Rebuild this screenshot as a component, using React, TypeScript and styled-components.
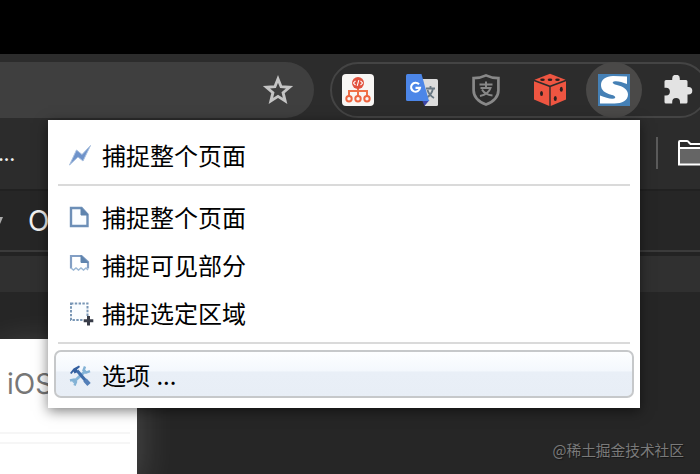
import { memo, ReactNode } from 'react';
import styled, { createGlobalStyle } from 'styled-components';

// SECTION: Styles

const GlobalStyle = createGlobalStyle`
  body {
    margin: 0;
    background: #262626;
    font-family: Inter, 'Liberation Sans', 'Noto Sans CJK SC', sans-serif;
  }
`;

const Screen = styled.div`
  position: relative;
  display: flex;
  flex-direction: column;
  width: 700px;
  height: 474px;
  overflow: hidden;
  background: #262626;
`;

const Desktop = styled.div`
  flex: none;
  height: 54px;
  background: #000;
`;

const Toolbar = styled.div`
  display: flex;
  flex: none;
  gap: 16px;
  box-sizing: border-box;
  height: 66px;
  padding-top: 8px;
  background: #2c2c2c;
`;

const AddressBar = styled.div`
  display: flex;
  flex: none;
  align-items: center;
  justify-content: flex-end;
  box-sizing: border-box;
  width: 314px;
  height: 56px;
  padding-right: 20px;
  border-radius: 0 28px 28px 0;
  background: #3f3f3f;
`;

const Extensions = styled.div`
  display: flex;
  flex: none;
  align-items: center;
  gap: 8px;
  box-sizing: border-box;
  width: 378px;
  height: 56px;
  border: 2px solid #444;
  border-radius: 28px;
`;

const Extension = styled.div<{ $active?: boolean }>`
  display: flex;
  flex: none;
  align-items: center;
  justify-content: center;
  width: 56px;
  height: 56px;
  border-radius: 50%;
  background: ${({ $active }) => ($active ? '#4a4948' : 'transparent')};

  &:first-child {
    margin-left: -2px;
  }

  svg {
    display: block;
  }
`;

const Bookmarks = styled.div`
  display: flex;
  flex: none;
  align-items: center;
  justify-content: space-between;
  box-sizing: border-box;
  height: 71px;
  padding-bottom: 4px;
  border-bottom: 2px solid #212121;
  background: #2c2c2c;
`;

const Ellipsis = styled.div`
  margin-left: -2px;
  padding-top: 2px;
  color: #f0f0f0;
  font-size: 20px;
  font-weight: 500;
  letter-spacing: -0.5px;
  line-height: 24px;
`;

const Folder = styled.div`
  display: flex;
  align-items: center;
  gap: 20px;
  width: 44px;

  svg {
    flex: none;
  }
`;

const Divider = styled.div`
  flex: none;
  width: 2px;
  height: 32px;
  background: #5b5b5b;
`;

const Tabs = styled.div`
  display: flex;
  flex: none;
  align-items: center;
  gap: 25px;
  box-sizing: border-box;
  height: 61px;
  border-bottom: 2px solid #3b3b3b;
  color: #f2f2f2;
  font-size: 28px;
`;

const Strip = styled.div`
  flex: none;
  box-sizing: border-box;
  height: 40px;
  border-top: 4px solid #232323;
  background: #303030;
`;

const Content = styled.div`
  display: flex;
  flex: 1;
  padding-top: 47px;
`;

const Page = styled.div`
  display: flex;
  flex-direction: column;
  width: 137px;
  background: #fff;
  box-shadow: 0 10px 36px rgba(255, 255, 255, 0.2);
`;

const Platform = styled.div`
  box-sizing: border-box;
  height: 93px;
  padding: 29px 0 0 7px;
  color: #777;
  font-size: 28px;
  line-height: 32px;
`;

const Rule = styled.div`
  width: 130px;
  height: 8px;
  border: solid #f6f6f6;
  border-width: 2px 0;
`;

const Menu = styled.div`
  position: absolute;
  top: 120px;
  left: 48px;
  box-sizing: border-box;
  width: 592px;
  height: 288px;
  padding: 10px 6px;
  background: #fff;
  box-shadow: 0 3px 12px rgba(0, 0, 0, 0.5);
`;

const Item = styled.div<{ $selected?: boolean }>`
  display: flex;
  align-items: center;
  gap: 8px;
  box-sizing: border-box;
  height: 48px;
  padding: 2px 0 0 10px;
  border: 2px solid ${({ $selected }) => ($selected ? '#c6c8ca' : 'transparent')};
  border-radius: 7px;
  background: ${({ $selected }) =>
    $selected ? 'linear-gradient(#fdfeff 0%, #f4f8fd 42%, #e9eff7 46%, #e8eef6 100%)' : 'none'};
  background-clip: padding-box;
  color: #000;
  font-family: 'Noto Sans CJK SC', sans-serif;
  font-size: 24px;
  line-height: 42px;
  white-space: nowrap;
  word-spacing: 1px;

  svg {
    flex: none;
  }
`;

const Separator = styled.div`
  height: 2px;
  margin: 6px 4px;
  background: #dadada;
`;

const Watermark = styled.div`
  position: absolute;
  right: 16px;
  bottom: 13px;
  color: #7a7a7a;
  font-family: 'Noto Sans CJK SC', sans-serif;
  font-size: 14.7px;
  line-height: 22px;
  text-shadow: 1px 1px 1px rgba(0, 0, 0, 0.4);
`;
// !SECTION

// SECTION: Icons

const StarIcon = () => (
  <svg width="32" height="32" viewBox="0 0 32 32" fill="none" stroke="#c4c4c4" strokeWidth="2.9">
    <path d="M16 5l3.1 7.7 8.4.6-6.4 5.4 2 8.2-7.1-4.500-7.100 4.500 2-8.200-6.400-5.400 8.400-.6z" />
  </svg>
);

const TreeIcon = () => (
  <svg width="32" height="32" viewBox="0 0 32 32" fill="none">
    <rect width="32" height="32" rx="4" fill="#f8f6f4" />
    <path d="M16 14v8M7 22v-5h18v5" stroke="#ef7148" strokeWidth="2" />
    <circle cx="16" cy="9" r="6" fill="#e2523e" />
    <path d="M13.5 6.8L11.5 9l2 2.2M18.5 6.8l2 2.2-2 2.2M16.8 6.2l-1.6 5.6" stroke="#fff" strokeWidth="1.1" />
    <g fill="#f8f6f4" stroke="#ee6540" strokeWidth="2">
      <circle cx="7" cy="24.8" r="2.7" />
      <circle cx="16" cy="24.8" r="2.7" />
      <circle cx="25" cy="24.8" r="2.7" />
    </g>
  </svg>
);

const TranslateIcon = () => (
  <svg width="32" height="32" viewBox="0 0 32 32" fill="none">
    <path d="M13 5h17.5q1.5 0 1.5 1.5v24q0 1.5-1.5 1.5H19z" fill="#dcdcdc" />
    <path d="M16 26h7.5L18.5 32z" fill="#3b45a8" />
    <path d="M20 14.5h9M24.5 12v2.5M27 14.5c-1 5-4 8-7 9.5M21.5 16c1.2 4 4 6.5 6.5 8" stroke="#687782" strokeWidth="1.8" />
    <path d="M1.5 0h14l7.5 27H1.5Q0 27 0 25.5v-24Q0 0 1.5 0z" fill="#4c86e8" />
    <path d="M13 10.3a4.5 4.5 0 1 0 1 3.6H9.5" stroke="#fff" strokeWidth="2.1" />
  </svg>
);

const ShieldIcon = () => (
  <svg width="30" height="34" viewBox="0 0 30 34" fill="none" stroke="#888">
    <path d="M15 2.4c4 2 8 2.8 12.4 2.8v12c0 7-5.4 11.6-12.4 14.4C8 28.8 2.6 24.2 2.6 17.2v-12C7 5.2 11 4.4 15 2.4z" strokeWidth="2.7" />
    <path d="M8.5 11.5h13M15 8.5v6.5M9.5 15h10c-1.5 4.5-5.5 7-10.5 8M11 16.5c2 3.5 5.5 5.5 10.5 6" strokeWidth="2" />
  </svg>
);

const DiceIcon = () => (
  <svg width="34" height="34" viewBox="0 0 34 34">
    <path d="M17 .8L32.5 6.8 17 12.6 1.5 6.8z" fill="#ee5541" />
    <path d="M1 8.2l15.3 5.8v19L1 26.5zM33 8.2L17.7 14v19L33 26.5z" fill="#ee5541" />
    <g fill="#2c2020">
      <ellipse cx="9.5" cy="6.8" rx="2.3" ry="1.2" />
      <ellipse cx="17" cy="6.8" rx="2.3" ry="1.2" />
      <ellipse cx="24.5" cy="6.8" rx="2.3" ry="1.2" />
      <ellipse cx="8.5" cy="20.5" rx="1.5" ry="2.5" />
      <ellipse cx="28.3" cy="16.2" rx="1.5" ry="2.5" />
      <ellipse cx="22.3" cy="25.5" rx="1.5" ry="2.5" />
    </g>
  </svg>
);

const SnapIcon = () => (
  <svg width="32" height="32" viewBox="0 0 32 32" fill="none">
    <rect width="32" height="32" fill="#4580b5" />
    <path d="M29 2.5V10c-5-2-10-3.3-13-2.5-2.5.8-1 2.5 2 3.2 7.5 1.8 12 4.8 12 9.8 0 6-6 9-13.5 9H2v-8c6 2.5 11 3.8 14 3 2.5-.8 1-2.7-2-3.5C6.5 19 3 16 3 11 3 5.5 8 2 15 2z" fill="#fff" />
  </svg>
);

const PuzzleIcon = () => (
  <svg width="30" height="30" viewBox="0 0 30 30">
    <path
      d="M3 5h6.2V3.5a3.8 3.8 0 0 1 7.6 0V5H23q1.5 0 1.5 1.5V12h1a3.8 3.8 0 0 1 0 7.6h-1V27q0 1.5-1.5 1.5h-6V27a3.9 3.9 0 0 0-7.8 0v1.5H3Q1.5 28.5 1.5 27v-6.5H3a3.9 3.9 0 0 0 0-7.8H1.5V6.5Q1.5 5 3 5z"
      fill="#e3e3e3"
    />
  </svg>
);

const FolderIcon = () => (
  <svg width="36" height="26" viewBox="0 0 36 26" fill="none">
    <path d="M1 8h34v16H1z" fill="#656565" />
    <path d="M1 24.5V2q0-1 1-1h7q1 0 2 1.5L12.5 4H35v20.5zM1 8h34" stroke="#fff" strokeWidth="2" />
  </svg>
);

const BoltIcon = () => (
  <svg width="28" height="28" viewBox="0 0 28 28">
    <path d="M3.5 24L10.5 9l5.500 4.500L24.500 4.500 17 20l-5-4z" fill="#6f93ca" stroke="#a9c0df" strokeWidth="1" />
  </svg>
);

const PageIcon = () => (
  <svg width="28" height="28" viewBox="0 0 28 28" fill="#fafdff">
    <path d="M5 5h10.500l6 6.500V23H5z" stroke="#6d8fb7" strokeWidth="2.4" />
    <path d="M15 5l7 7h-7z" fill="#5f84ae" stroke="#5f84ae" />
  </svg>
);

const VisibleIcon = () => (
  <svg width="28" height="28" viewBox="0 0 28 28" fill="none">
    <path d="M5 17.500V5h10.500l6.500 6v6.500" stroke="#839fc4" strokeWidth="2.2" />
    <path d="M15 4.500l7 7h-7z" fill="#5f84ae" stroke="#5f84ae" />
    <path d="M5 17l2.500 2L10 17l2.500 2 2.500-2 2.500 2 2.500-2 2 2" stroke="#9bb7d4" strokeWidth="1.5" />
  </svg>
);

const RegionIcon = () => (
  <svg width="28" height="28" viewBox="0 0 28 28" fill="none">
    <rect x="5" y="4.500" width="16.500" height="16.500" fill="#fafdff" stroke="#7896b5" strokeWidth="2" strokeDasharray="2.4 1.4" />
    <path d="M22.500 17v10M17.500 22h10" stroke="#fff" strokeWidth="5" />
    <path d="M22.500 17v9.500M17.700 21.700h9.600" stroke="#383c48" strokeWidth="3" />
  </svg>
);

const ToolsIcon = () => (
  <svg width="28" height="28" viewBox="0 0 28 28" fill="none">
    <path d="M7 21.5L20 9.5" stroke="#86b5d9" strokeWidth="3" />
    <path d="M19 5.5l-1.500 4 2.500 2.200 4-1.500M4 19.500l4-1 2 2.500-1.500 3.500" stroke="#83b2d5" strokeWidth="2.4" />
    <path d="M11 9.500l11 13" stroke="#3e6ca9" strokeWidth="3.2" />
    <path d="M19 19l4 4.500" stroke="#547fb8" strokeWidth="4.5" />
    <path d="M4 12l3.500-4.500L13 4.500l1 1.500-3 2.500.5 2.500-3 1.500-1-2-2 2.500z" fill="#345f9f" />
  </svg>
);
// !SECTION

// SECTION: Main

interface Entry {
  icon?: ReactNode;
  label?: string;
  selected?: boolean;
}

const entries: Entry[] = [
  { icon: <BoltIcon />, label: '捕捉整个页面' },
  {},
  { icon: <PageIcon />, label: '捕捉整个页面' },
  { icon: <VisibleIcon />, label: '捕捉可见部分' },
  { icon: <RegionIcon />, label: '捕捉选定区域' },
  {},
  { icon: <ToolsIcon />, label: '选项 ...', selected: true },
];

const App = () => (
  <Screen>
    <GlobalStyle />
    <Desktop />
    <Toolbar>
      <AddressBar>
        <StarIcon />
      </AddressBar>
      <Extensions>
        <Extension><TreeIcon /></Extension>
        <Extension><TranslateIcon /></Extension>
        <Extension><ShieldIcon /></Extension>
        <Extension><DiceIcon /></Extension>
        <Extension $active><SnapIcon /></Extension>
        <Extension><PuzzleIcon /></Extension>
      </Extensions>
    </Toolbar>
    <Bookmarks>
      <Ellipsis>...</Ellipsis>
      <Folder>
        <Divider />
        <FolderIcon />
      </Folder>
    </Bookmarks>
    <Tabs>
      <svg width="3" height="8" viewBox="0 0 3 8">
        <path d="M0 0h3L0 7z" fill="#aaa" />
      </svg>
      O
    </Tabs>
    <Strip />
    <Content>
      <Page>
        <Platform>iOS</Platform>
        <Rule />
      </Page>
    </Content>
    <Menu>
      {entries.map(({ icon, label, selected }, index) =>
        label ? (
          <Item key={index} $selected={selected}>
            {icon}
            {label}
          </Item>
        ) : (
          <Separator key={index} />
        ),
      )}
    </Menu>
    <Watermark>@稀土掘金技术社区</Watermark>
  </Screen>
);
// !SECTION

export default memo(App);
